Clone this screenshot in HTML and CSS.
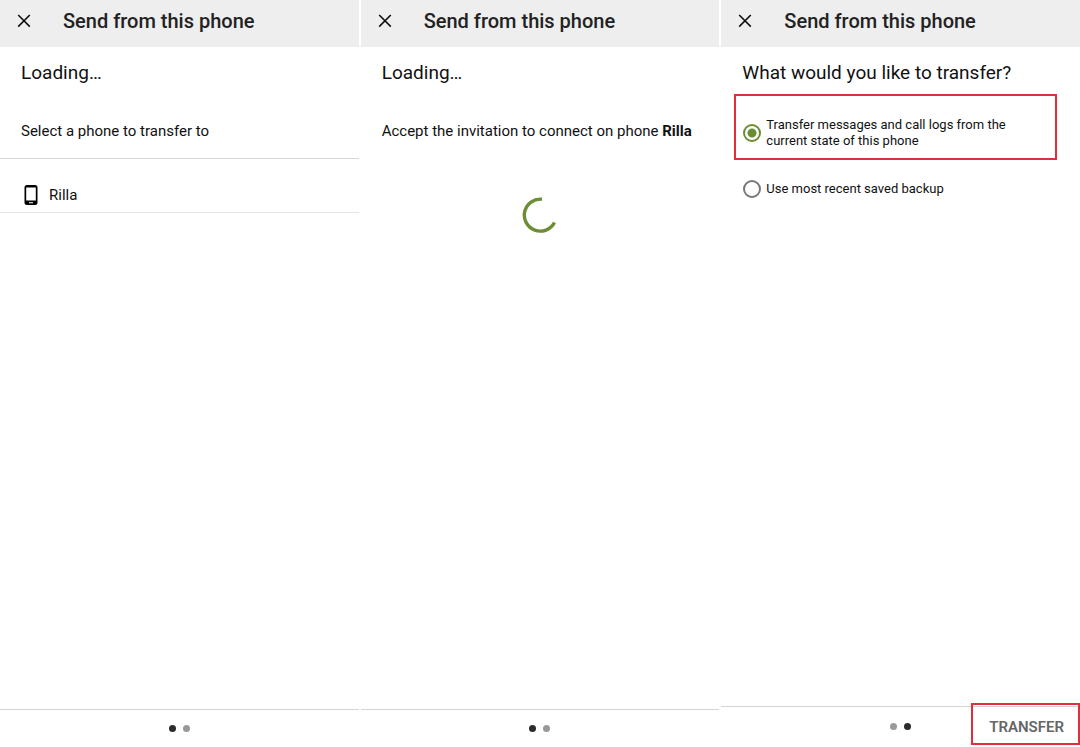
FILE: index.html
```html
<!DOCTYPE html>
<html lang="en">
<head>
  <meta charset="UTF-8" />
  <meta name="viewport" content="width=device-width, initial-scale=1" />
  <title>Send from this phone</title>
  <link rel="stylesheet" href="styles.css">
</head>
<body>
  <main class="screens">

    <!-- Step 1: pick a phone -->
    <section class="screen">
      <header class="app-bar">
        <button type="button" class="close" aria-label="Close">
          <svg width="14" height="14" viewBox="0 0 14 14"><path d="M1.2 1l11.600 11.600M12.800 1L1.200 12.600" /></svg>
        </button>
        <h1>Send from this phone</h1>
      </header>
      <div class="content">
        <h2>Loading…</h2>
        <p class="message">Select a phone to transfer to</p>
        <ul class="devices">
          <li>
            <button type="button" class="device">
              <svg width="14" height="20" viewBox="0 0 14 20"><path fill-rule="evenodd" d="M3 0h8a2.500 2.500 0 0 1 2.500 2.500v15a2.500 2.500 0 0 1-2.500 2.500H3a2.500 2.500 0 0 1-2.500-2.500v-15A2.500 2.500 0 0 1 3 0zM2.200 2.500v13h9.600v-13zM5 17.200v1h4v-1z" /></svg>
              Rilla
            </button>
          </li>
        </ul>
      </div>
      <footer class="bottom-bar">
        <span class="dot active"></span>
        <span class="dot"></span>
      </footer>
    </section>

    <!-- Step 1: waiting for the other phone -->
    <section class="screen">
      <header class="app-bar">
        <button type="button" class="close" aria-label="Close">
          <svg width="14" height="14" viewBox="0 0 14 14"><path d="M1.2 1l11.600 11.600M12.800 1L1.200 12.600" /></svg>
        </button>
        <h1>Send from this phone</h1>
      </header>
      <div class="content">
        <h2>Loading…</h2>
        <p class="message">Accept the invitation to connect on phone <b>Rilla</b></p>
        <svg class="spinner" width="36" height="36" viewBox="0 0 36 36"><path d="M20 2.200A16 16 0 1 0 32.500 25.500" /></svg>
      </div>
      <footer class="bottom-bar">
        <span class="dot active"></span>
        <span class="dot"></span>
      </footer>
    </section>

    <!-- Step 2: choose what to transfer -->
    <section class="screen">
      <header class="app-bar">
        <button type="button" class="close" aria-label="Close">
          <svg width="14" height="14" viewBox="0 0 14 14"><path d="M1.2 1l11.600 11.600M12.800 1L1.200 12.600" /></svg>
        </button>
        <h1>Send from this phone</h1>
      </header>
      <form class="content" id="transferForm">
        <h2>What would you like to transfer?</h2>
        <div class="option highlight">
          <input type="radio" name="source" id="current" checked />
          <label for="current">Transfer messages and call logs from the current state of this phone</label>
        </div>
        <div class="option">
          <input type="radio" name="source" id="backup" />
          <label for="backup">Use most recent saved backup</label>
        </div>
      </form>
      <footer class="bottom-bar with-action">
        <span class="dot"></span>
        <span class="dot active"></span>
        <button type="submit" form="transferForm" class="transfer">TRANSFER</button>
      </footer>
    </section>

  </main>
</body>
</html>
```
FILE: styles.css
```css
* {
  box-sizing: border-box;
}

body {
  margin: 0;
  font-family: Roboto, "Liberation Sans", sans-serif;
  color: #111;
  background: #fff;
}

h1, h2, p, ul {
  margin: 0;
  padding: 0;
}

button {
  border: none;
  background: none;
  padding: 0;
  font-family: inherit;
  color: inherit;
  cursor: pointer;
}

svg {
  display: block;
}

.screens {
  display: grid;
  grid-template-columns: repeat(3, 1fr);
  gap: 2px;
  min-height: 100vh;
}

.screen {
  display: flex;
  flex-direction: column;
}

.app-bar {
  display: flex;
  align-items: center;
  gap: 32px;
  padding: 9px 17px 14px;
  background: #eee;
}

.app-bar h1 {
  font-size: 20px;
  line-height: 24px;
  font-weight: 500;
  color: #222;
}

.close path {
  fill: none;
  stroke: #111;
  stroke-width: 1.6;
}

.content {
  flex: 1;
}

.content h2 {
  padding: 14px 21px 9px;
  font-size: 19px;
  line-height: 24px;
  font-weight: 400;
}

.message {
  padding: 27px 21px 17px;
  font-size: 15px;
  line-height: 20px;
}

.devices {
  list-style: none;
  border-top: 1px solid #d4d4d4;
}

.device {
  display: flex;
  align-items: center;
  gap: 11px;
  width: 100%;
  padding: 26px 24px 7px;
  border-bottom: 1px solid #e4e4e4;
  font-size: 15px;
  line-height: 20px;
}

.spinner {
  margin: 39px auto 0;
}

.spinner path {
  fill: none;
  stroke: #6b8e34;
  stroke-width: 3.4;
}

.option {
  display: flex;
  align-items: center;
  gap: 5px;
  padding: 20px 22px;
  font-size: 13px;
  line-height: 16px;
}

.option.highlight {
  margin: 0 23px 0 13px;
  padding: 21px 24px 9px 7px;
  border: 2px solid #e02f3b;
}

.option input {
  appearance: none;
  flex: none;
  width: 18px;
  height: 18px;
  margin: 0;
  border: 2px solid #777;
  border-radius: 50%;
}

.option input:checked {
  border-color: #6b8e34;
  background: radial-gradient(circle, #6b8e34 4px, #fff 5px);
}

.bottom-bar {
  position: relative;
  display: flex;
  justify-content: center;
  align-items: center;
  gap: 7px;
  height: 38px;
  border-top: 1px solid #d4d4d4;
}

.bottom-bar.with-action {
  height: 41px;
  padding-bottom: 2px;
}

.dot {
  width: 7px;
  height: 7px;
  border-radius: 50%;
  background: #999;
}

.dot.active {
  background: #2b2b2b;
}

.transfer {
  position: absolute;
  top: -4px;
  right: 0;
  padding: 12px 14px 6px 16px;
  border: 2px solid #e02f3b;
  font-size: 15px;
  line-height: 20px;
  font-weight: 600;
  color: #666;
}
```
